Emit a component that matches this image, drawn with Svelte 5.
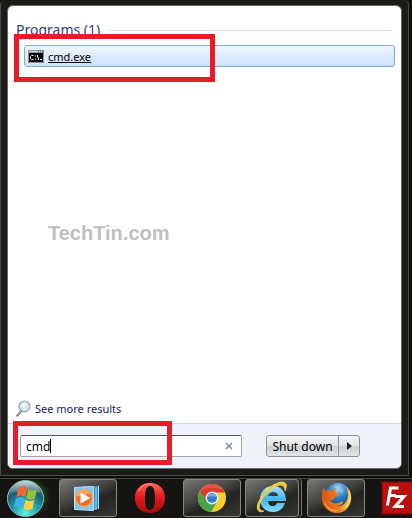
<script lang="ts">
  type App = { id: string; name: string; open: boolean; stacked?: boolean };

  let query = $state('cmd');

  const results = ['cmd.exe'];

  const apps: App[] = [
    { id: 'player', name: 'Windows Media Player', open: true },
    { id: 'opera', name: 'Opera', open: false },
    { id: 'chrome', name: 'Google Chrome', open: true },
    { id: 'ie', name: 'Internet Explorer', open: true, stacked: true },
    { id: 'firefox', name: 'Mozilla Firefox', open: true },
    { id: 'filezilla', name: 'FileZilla', open: false },
  ];
</script>

<div class="desktop">
  <main class="menu">
    <div class="panel">
      <section class="results">
        <h1><span>Programs ({results.length})</span></h1>
        <div class="marked">
          {#each results as name}
            <button class="result">
              <svg width="16" height="13" viewBox="0 0 16 13" aria-hidden="true">
                <rect width="16" height="13" fill="#8d9297" />
                <rect x="1" y="1" width="14" height="1" fill="#d9dde0" />
                <path d="M10 1h1v1h-1zM12 1h1v1h-1zM14 1h1v1h-1z" fill="#666" />
                <rect x="1" y="3" width="14" height="9" fill="#000" />
                <path
                  d="M5.500 5.500h-2l-1 1v2l1 1h2M7.500 5.500v1M7.500 8.500v1M9.500 5v2l1 1v2M12 9.500h2"
                  fill="none" stroke="#fff"
                />
              </svg>
              <span>{name}</span>
            </button>
          {/each}
          <div class="mark mark-result"></div>
        </div>
        <p class="watermark">TechTin.com</p>
        <a class="more" href="#results">
          <svg width="15" height="17" viewBox="0 0 15 17" aria-hidden="true">
            <path d="M5.500 10.500L1.500 15.500" stroke="#777c82" stroke-width="2.500" stroke-linecap="round" />
            <path d="M5 10.500L1.500 15" stroke="#c6cacd" stroke-width="1" />
            <circle cx="8.500" cy="6.500" r="5.300" fill="#d5e9f6" stroke="#a0a9b2" stroke-width="1.500" />
            <path d="M5 7a3.500 3.500 0 0 1 6-3c-1 2-3 3-6 3z" fill="#f6fbff" />
          </svg>
          <span>See more results</span>
        </a>
      </section>

      <footer>
        <div class="search">
          <input type="text" aria-label="Search programs and files" bind:value={query} />
          <span class="typed" aria-hidden="true"></span>
          <button class="clear" aria-label="Clear search" onclick={() => (query = '')}>
            <svg width="8" height="8" viewBox="0 0 8 8"><path d="M1 1l6 6M7 1l-6 6" stroke="#5d89ae" stroke-width="1.400" /></svg>
          </button>
          <div class="mark mark-search"></div>
        </div>
        <div class="power">
          <button class="shutdown">Shut down</button>
          <button class="arrow" aria-label="More power options">
            <svg width="5" height="8" viewBox="0 0 5 8"><path d="M0 0l5 4-5 4z" fill="#222" /></svg>
          </button>
        </div>
      </footer>
    </div>
  </main>

  <nav class="taskbar">
    <button class="orb" aria-label="Start">
      <svg width="52" height="39" viewBox="0 0 52 39">
        <defs>
          <radialGradient id="orb" cx=".5" cy=".9" r=".9">
            <stop offset="0" stop-color="#5ff3e5" />
            <stop offset=".35" stop-color="#24a9b5" />
            <stop offset=".7" stop-color="#1d5a72" />
            <stop offset="1" stop-color="#6f8d92" />
          </radialGradient>
          <radialGradient id="glow">
            <stop offset=".3" stop-color="#3f9a35" stop-opacity=".8" />
            <stop offset="1" stop-color="#1a4a18" stop-opacity="0" />
          </radialGradient>
          <linearGradient id="gloss" x2="0" y2="1">
            <stop offset="0" stop-color="#eef5f5" stop-opacity=".75" />
            <stop offset="1" stop-color="#b8d0d4" stop-opacity=".1" />
          </linearGradient>
        </defs>
        <circle cx="32" cy="18" r="20" fill="url(#glow)" />
        <circle cx="25.500" cy="19.500" r="18" fill="url(#orb)" stroke="#8fc0bf" />
        <path d="M9 15a17 17 0 0 1 33 0c-9-4-22-3-33 0z" fill="url(#gloss)" />
        <path d="M18.500 9c3-2 6-2 9 0l-2 9c-3-2-6-2-9 0z" fill="#f0682c" />
        <path d="M28.500 10c3 2 5 2 8.500 0l-2 9c-3 2-6 2-9 0z" fill="#8cc63b" />
        <path d="M16 19.500c3-2 6-2 9 0l-2 9c-3-2-6-2-9 0z" fill="#3eb0ec" />
        <path d="M25.500 20.500c3 2 6 2 9 0l-2 9c-3 2-6 2-9 0z" fill="#fcd13c" />
      </svg>
    </button>

    {#each apps as app}
      <button class="task {app.id}" class:open={app.open} class:stacked={app.stacked} aria-label={app.name}>
        {#if app.id === 'player'}
          <svg width="28" height="26" viewBox="0 0 28 26">
            <path d="M8 1h16.500v22l-3 2H6z" fill="#348fc2" />
            <path d="M24.500 1v23M22 2v23" stroke="#a5dbf4" />
            <path d="M.5 2.500l19-1v24l-19-1z" fill="#86c5e7" stroke="#b8e1f4" />
            <circle cx="10" cy="13" r="8.500" fill="#ee7020" stroke="#f7b269" />
            <path d="M2.500 11a7.500 7.500 0 0 1 14-2c-5 0-9 3-14 2z" fill="#f8a65c" />
            <path d="M6.500 7.500l10 5.500-10 5.500z" fill="#fff" />
          </svg>
        {:else if app.id === 'opera'}
          <svg width="30" height="32" viewBox="0 0 30 32">
            <defs>
              <linearGradient id="opera" x2="0" y2="1">
                <stop offset="0" stop-color="#ff6a5c" />
                <stop offset=".45" stop-color="#e41d1d" />
                <stop offset="1" stop-color="#a90808" />
              </linearGradient>
            </defs>
            <path
              fill-rule="evenodd"
              d="M15 1C6 1 0 7 0 16s6 15 15 15 15-6 15-15S24 1 15 1zm0 3c4 0 5 5 5 12s-1 12-5 12-5-5-5-12 1-12 5-12z"
              fill="url(#opera)"
            />
            <path d="M4 9c3-7 9-8 14-6" fill="none" stroke="#ffa397" stroke-opacity=".6" />
          </svg>
        {:else if app.id === 'chrome'}
          <svg width="30" height="30" viewBox="0 0 30 30">
            <circle cx="15" cy="15" r="14" fill="#f7ce2c" />
            <path d="M2.900 8A14 14 0 0 0 14 29l6.500-11L9.500 18z" fill="#45a748" />
            <path d="M2.900 8A14 14 0 0 1 28 9.500H15L9 18z" fill="#dc3c30" />
            <path d="M3 8a14 14 0 0 1 23-1c-8-3-16-3-23 1z" fill="#ec6a58" fill-opacity=".6" />
            <circle cx="15" cy="15" r="6.500" fill="#eef3f5" />
            <circle cx="15" cy="15" r="5" fill="#357fc8" />
            <path d="M10.500 14a4.600 4.600 0 0 1 9 0c-3-1-6-1-9 0z" fill="#70acdf" />
          </svg>
        {:else if app.id === 'ie'}
          <svg width="32" height="34" viewBox="0 0 32 34">
            <defs>
              <linearGradient id="ie" x2="0" y2="1">
                <stop offset="0" stop-color="#a4e6fb" />
                <stop offset=".5" stop-color="#43b5ec" />
                <stop offset="1" stop-color="#82dcf9" />
              </linearGradient>
            </defs>
            <path
              fill-rule="evenodd"
              d="M17 5C9 5 4 11 4 18s5 13 13 13c6 0 10-3 12-9h-8c-1 2-2 3-4 3-3 0-5-2-5-5h18C30 11 25 5 17 5zm-5 10c1-3 3-4 5-4 3 0 5 2 5 4z"
              fill="url(#ie)"
            />
            <path
              d="M8 30c-6 3-9-2-5-10C8 9 19 1 26 1c4 0 6 3 3 9 0-4-2-6-5-6-6 1-15 8-19 16-3 6-2 10 3 10z"
              fill="#f4c52a" stroke="#ffe477" stroke-width=".6"
            />
          </svg>
        {:else if app.id === 'firefox'}
          <svg width="31" height="32" viewBox="0 0 31 32">
            <defs>
              <radialGradient id="globe" cx=".5" cy=".2" r=".8">
                <stop offset="0" stop-color="#8fd0f4" />
                <stop offset=".5" stop-color="#2878bd" />
                <stop offset="1" stop-color="#143b7c" />
              </radialGradient>
              <linearGradient id="fox" x2="1" y2="0">
                <stop offset="0" stop-color="#dc5516" />
                <stop offset=".6" stop-color="#f1801e" />
                <stop offset="1" stop-color="#fbd146" />
              </linearGradient>
            </defs>
            <circle cx="17" cy="14" r="13" fill="url(#globe)" />
            <path d="M14 4c4-2 6 0 5 3l4 1-2 3-4-1-3 2z" fill="#9ad3ef" fill-opacity=".5" />
            <path
              d="M3 5c0 2 1 3 2 4 2-1 4-1 6 0 1-2 3-3 5-3-2 1-2 3-2 4l4 2c0 2-3 2-5 4 0 3-3 2-4 2 2 4 7 4 10 2 2-1 3 0 3 1-2 2-4 3-7 3 7 1 12-4 12-11 0-4-1-7-3-9 5 3 7 8 6 14-1 8-7 13-14 13C8 31 1 25 1 17c0-5 0-9 2-12z"
              fill="url(#fox)"
            />
            <path d="M3 18c2 7 8 11 15 10-6 4-14-1-15-10z" fill="#f9a936" />
            <path d="M27 9c3 8 0 15-7 18 8-1 12-10 7-18z" fill="#fee171" />
          </svg>
        {:else}
          <svg width="34" height="34" viewBox="0 0 34 34">
            <rect x="1" y="1" width="32" height="32" fill="#b50d0d" stroke="#7c0808" stroke-width="2" stroke-dasharray="3 2" />
            <rect x="2" y="2" width="30" height="30" fill="#bb1010" />
            <path d="M6.500 24.500L9.500 7h8M8 14.500h7" fill="none" stroke="#fff" stroke-width="3" />
            <path d="M14 15.500h9l-9 10h9" fill="none" stroke="#fff" stroke-width="3" />
          </svg>
        {/if}
      </button>
    {/each}
  </nav>
</div>

<style>
  :global(body) {
    margin: 0;
    background: #0d0d0c;
  }
  .desktop {
    display: flex;
    flex-direction: column;
    min-height: 100vh;
    overflow: hidden;
    font-family: "Noto Sans", "Open Sans", sans-serif;
    font-size: 11px;
    color: #000;
  }
  button {
    font: inherit;
    color: inherit;
    padding: 0;
    border: 0;
    background: none;
  }
  svg {
    display: block;
    flex: none;
  }

  /* Start menu */
  .menu {
    flex: 1;
    display: flex;
    margin-right: 3px;
    padding: 5px 6px 6px;
    border: 1px solid #4a4a47;
    border-top: 0;
    border-radius: 5px 5px 0 0;
    background: #1c1b18;
  }
  .panel {
    flex: 1;
    display: flex;
    flex-direction: column;
    border: 1px solid #66686a;
    border-radius: 6px;
    background: #fff;
  }
  .results {
    flex: 1;
    display: flex;
    flex-direction: column;
    padding: 14px 6px 6px 8px;
  }
  h1 {
    display: flex;
    align-items: center;
    gap: 8px;
    margin: 0 3px 0 0;
    font-size: 14px;
    font-weight: 400;
    line-height: 20px;
    color: #2c4184;
  }
  h1::after {
    content: '';
    flex: 1;
    height: 1px;
    background: #e0e1e3;
  }
  .marked {
    position: relative;
    margin: 5px 0 0 8px;
  }
  .result {
    display: flex;
    align-items: center;
    gap: 4px;
    width: 100%;
    height: 22px;
    padding: 0 3px;
    border: 1px solid #86a8d0;
    border-radius: 3px;
    background: linear-gradient(#eff5fe, #cfe2fc);
    text-decoration: underline;
  }
  .mark {
    position: absolute;
    box-sizing: border-box;
    border: 5px solid #e81c26;
    pointer-events: none;
  }
  .mark-result {
    left: -10px;
    top: -11px;
    width: 201px;
    height: 48px;
  }
  .watermark {
    margin: 154px 0 0 32px;
    font: bold 20px/24px "Liberation Sans", Arial, sans-serif;
    color: #c0c0c0;
  }
  .more {
    display: flex;
    align-items: center;
    gap: 4px;
    margin-top: auto;
    color: #10246f;
    text-decoration: none;
  }

  /* Search and power row */
  footer {
    display: flex;
    align-items: center;
    gap: 24px;
    height: 44px;
    padding: 0 12px;
    border-top: 1px solid #c9d7e4;
    border-radius: 0 0 5px 5px;
    background: #f0f3fb;
  }
  .search {
    position: relative;
    flex: 0 1 222px;
    display: flex;
    box-sizing: border-box;
    height: 22px;
    border: 1px solid #9ea4ab;
    border-top-color: #50555b;
    border-radius: 2px;
    background: #fff;
  }
  .search input {
    field-sizing: content;
    min-width: 2px;
    padding: 0 0 0 5px;
    border: 0;
    outline: 0;
    background: none;
    font: inherit;
    font-size: 12px;
  }
  .typed {
    align-self: center;
    width: 1px;
    height: 14px;
    background: #000;
  }
  .clear {
    display: flex;
    align-items: center;
    margin-left: auto;
    padding: 0 8px;
  }
  .mark-search {
    left: -8px;
    top: -15px;
    width: 159px;
    height: 44px;
  }
  .power {
    display: flex;
    box-sizing: border-box;
    height: 22px;
    border: 1px solid #8d9196;
    border-radius: 3px;
    background: linear-gradient(#f4f5f7, #e3e5e8 48%, #cdd0d4 52%, #e2e4e8);
  }
  .shutdown {
    width: 71px;
    font-size: 12px;
    white-space: nowrap;
  }
  .arrow {
    display: flex;
    align-items: center;
    justify-content: center;
    width: 21px;
    border-left: 1px solid #8d9196;
  }

  /* Taskbar */
  .taskbar {
    display: flex;
    height: 39px;
    border-top: 1px solid #464643;
    margin-top: 2px;
    background: #151412;
  }
  .orb {
    flex: none;
    width: 59px;
  }
  .task {
    position: relative;
    flex: none;
    display: flex;
    align-items: center;
    justify-content: center;
    box-sizing: border-box;
    width: 58px;
    height: 38px;
  }
  .open {
    border: 1px solid #868684;
    border-radius: 3px;
    background: linear-gradient(155deg, #777775, #454543 40%, #232321 60%, #373735);
  }
  .opera {
    width: 66px;
  }
  .chrome {
    margin-right: 4px;
  }
  .stacked {
    width: 54px;
    margin-right: 8px;
    box-shadow: 2px 0 #1a1a18, 3px 0 #777775;
  }
  .filezilla {
    width: 34px;
    margin-left: 16px;
  }
</style>
